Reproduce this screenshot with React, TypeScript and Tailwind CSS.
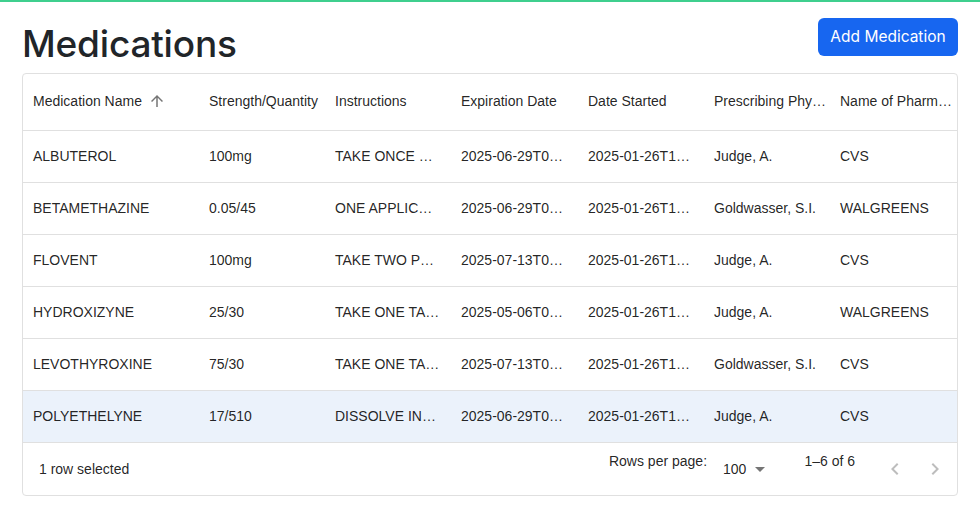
import React from "react";

const rows = [
  ["ALBUTEROL", "100mg", "TAKE ONCE …", "2025-06-29T0…", "2025-01-26T1…", "Judge, A.", "CVS"],
  ["BETAMETHAZINE", "0.05/45", "ONE APPLIC…", "2025-06-29T0…", "2025-01-26T1…", "Goldwasser, S.I.", "WALGREENS"],
  ["FLOVENT", "100mg", "TAKE TWO P…", "2025-07-13T0…", "2025-01-26T1…", "Judge, A.", "CVS"],
  ["HYDROXIZYNE", "25/30", "TAKE ONE TA…", "2025-05-06T0…", "2025-01-26T1…", "Judge, A.", "WALGREENS"],
  ["LEVOTHYROXINE", "75/30", "TAKE ONE TA…", "2025-07-13T0…", "2025-01-26T1…", "Goldwasser, S.I.", "CVS"],
  ["POLYETHELYNE", "17/510", "DISSOLVE IN…", "2025-06-29T0…", "2025-01-26T1…", "Judge, A.", "CVS"],
];

const headers = [
  "Medication Name",
  "Strength/Quantity",
  "Instructions",
  "Expiration Date",
  "Date Started",
  "Prescribing Phy…",
  "Name of Pharm…",
];

const widths = ["w-[176px]", "w-[126px]", "w-[126px]", "w-[127px]", "w-[126px]", "w-[126px]", "flex-1"];

export default function App() {
  return (
    <div className="w-[980px] h-[519px] bg-white border-t-2 border-[#3fcf8e] font-['Liberation_Sans',Arial,sans-serif] text-[rgba(0,0,0,0.87)]">
      <div className="px-[22px]">
        <div className="flex items-center justify-between h-[71px] pt-[1px]">
          <h1 className="font-['Inter',sans-serif] font-medium text-[37px] leading-none text-[#212529] tracking-[-0.2px] mt-[10px]">
            Medications
          </h1>
          <button className="h-[38px] w-[140px] rounded-[6px] bg-[#1766f0] text-white font-['Inter',sans-serif] text-[15.5px] mt-[-3px]">
            Add Medication
          </button>
        </div>
        <div className="border border-[#e0e0e0] rounded-[4px] text-[14px]">
          <div className="flex h-[57px] items-center pb-[2px] border-b border-[#e0e0e0]">
            {headers.map((h, i) => (
              <div key={i} className={`${widths[i]} px-[10px] flex items-center gap-[6px] whitespace-nowrap overflow-hidden`}>
                <span>{h}</span>
                {i === 0 && (
                  <svg width="18" height="18" viewBox="0 0 24 24" className="fill-[#757575]">
                    <path d="m20 12-1.41-1.41L13 16.17V4h-2v12.17l-5.58-5.59L4 12l8 8 8-8z" transform="rotate(180 12 12)" />
                  </svg>
                )}
              </div>
            ))}
          </div>
          {rows.map((r, ri) => (
            <div
              key={ri}
              className={`flex h-[52px] items-center border-b border-[#e0e0e0] ${ri === 5 ? "bg-[#ebf2fb]" : ""}`}
            >
              {r.map((c, ci) => (
                <div key={ci} className={`${widths[ci]} px-[10px] whitespace-nowrap overflow-hidden`}>
                  {c}
                </div>
              ))}
            </div>
          ))}
          <div className="flex h-[52px] items-center justify-between">
            <div className="pl-[16px]">1 row selected</div>
            <div className="flex items-center h-full">
              <span className="mt-[-16px]">Rows per page:</span>
              <div className="flex items-center ml-[16px] mr-[32px]">
                <span>100</span>
                <svg width="24" height="24" viewBox="0 0 24 24" className="fill-[#757575] ml-[2px]">
                  <path d="M7 10l5 5 5-5z" />
                </svg>
              </div>
              <span className="mt-[-16px] mr-[28px]">1–6 of 6</span>
              <div className="flex items-center gap-[16px] mr-[10px]">
                <svg width="24" height="24" viewBox="0 0 24 24" className="fill-[#bdbdbd]">
                  <path d="M15.41 7.41 14 6l-6 6 6 6 1.41-1.41L10.83 12z" />
                </svg>
                <svg width="24" height="24" viewBox="0 0 24 24" className="fill-[#bdbdbd]">
                  <path d="M10 6 8.59 7.41 13.17 12l-4.58 4.59L10 18l6-6z" />
                </svg>
              </div>
            </div>
          </div>
        </div>
      </div>
    </div>
  );
}
